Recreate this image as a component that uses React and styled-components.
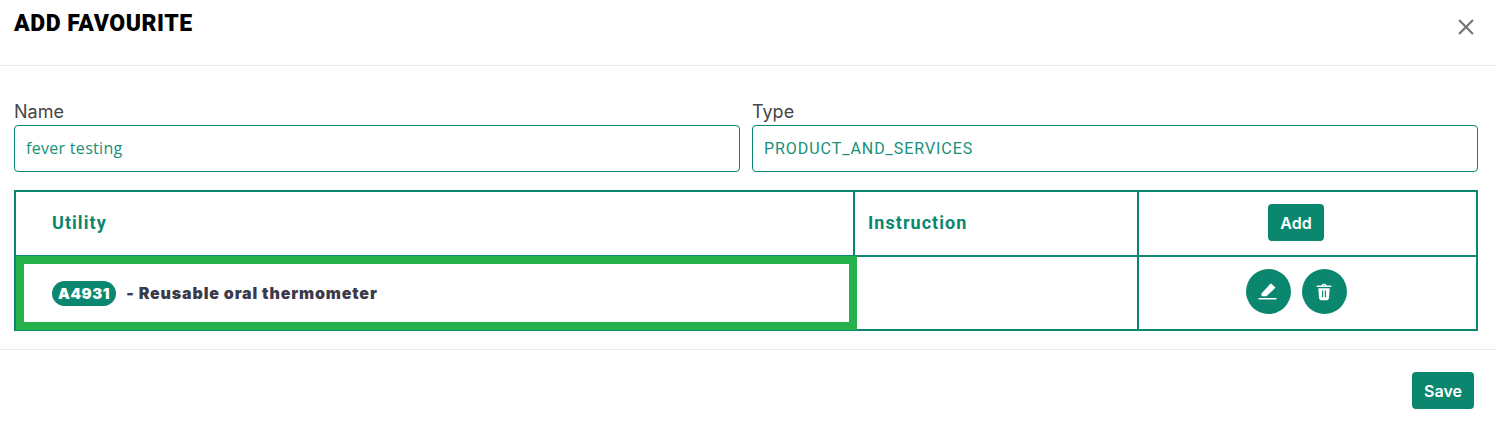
import styled, { createGlobalStyle } from 'styled-components';

const GlobalStyle = createGlobalStyle`
  body {
    margin: 0;
    background: #fff;
    font-family: Inter, "Liberation Sans", sans-serif;
  }
`;

const Modal = styled.div`
  width: 1496px;
  height: 422px;
  overflow: hidden;
`;

const Header = styled.header`
  display: flex;
  justify-content: space-between;
  height: 66px;
  padding: 11px 18px 0 14px;
  box-sizing: border-box;
  border-bottom: 1px solid #e9e9e9;
`;

const Title = styled.h2`
  margin: 0;
  font-family: Roboto, sans-serif;
  font-size: 23px;
  line-height: 26px;
  font-weight: 900;
  color: #000;
  letter-spacing: 0.55px;
`;

const Close = styled.button`
  width: 24px;
  height: 24px;
  margin-top: 4px;
  padding: 0;
  border: 0;
  background: none;
  color: #757575;
`;

const Body = styled.div`
  padding: 33px 18px 18px 14px;
  border-bottom: 1px solid #e9e9e9;
`;

const Fields = styled.div`
  display: grid;
  grid-template-columns: 726px 726px;
  gap: 12px;
  margin-bottom: 18px;
`;

const Field = styled.label`
  display: block;
`;

const LabelText = styled.span`
  display: block;
  margin-bottom: 1px;
  font-size: 18px;
  line-height: 25px;
  color: #454545;
`;

const Input = styled.input`
  display: block;
  width: 100%;
  height: 47px;
  box-sizing: border-box;
  padding: 0 11px ${({ $mono }) => ($mono ? 0 : 2)}px;
  border: 1px solid #0b866f;
  border-radius: 4px;
  outline: none;
  font-family: ${({ $mono }) => ($mono ? 'Roboto' : '"Open Sans"')}, sans-serif;
  font-size: 16px;
  letter-spacing: ${({ $mono }) => ($mono ? '0.95px' : '0.3px')};
  color: #179078;
`;

const Table = styled.table`
  width: 1462px;
  table-layout: fixed;
  border-collapse: collapse;
`;

const Th = styled.th`
  height: 61px;
  padding: 0 ${({ $right }) => $right || 0}px 2px ${({ $pad }) => $pad || 0}px;
  border: 2px solid #0b866f;
  text-align: ${({ $center }) => ($center ? 'center' : 'left')};
  font-family: Roboto, sans-serif;
  font-size: 18px;
  font-weight: 700;
  letter-spacing: 1.05px;
  color: #0b866f;
`;

const Td = styled.td`
  height: 72px;
  padding: 0 0 0 ${({ $pad }) => $pad || 0}px;
  border: 2px solid #0b866f;
`;

/* thick green selection frame, sits over the cell borders */
const HighlightCell = styled(Td)`
  position: relative;

  &::after {
    content: '';
    position: absolute;
    top: -1px;
    left: 0;
    right: -4px;
    bottom: -1px;
    border: 8px solid #25b14c;
    pointer-events: none;
  }
`;

const Code = styled.span`
  display: inline-block;
  padding: 0 6px;
  height: 25px;
  line-height: 25px;
  border-radius: 13px;
  background: #0b866f;
  color: #fff;
  font-size: 15px;
  font-weight: 900;
  letter-spacing: 0.55px;
`;

const Desc = styled.span`
  margin-left: 10px;
  font-size: 16px;
  font-weight: 900;
  letter-spacing: 0.85px;
  color: #3a3a4a;
`;

const Button = styled.button`
  height: 37px;
  padding: 0 12px;
  border: 0;
  border-radius: 4px;
  background: #0b866f;
  color: #fff;
  font-family: Inter, sans-serif;
  font-size: 16px;
  font-weight: 600;
`;

const Actions = styled.div`
  display: flex;
  justify-content: center;
  gap: 11px;
  margin: -3px 23px 0 0;
`;

const RoundButton = styled.button`
  display: flex;
  align-items: center;
  justify-content: center;
  width: 45px;
  height: 45px;
  padding: 0;
  border: 0;
  border-radius: 50%;
  background: #0b866f;
  color: #fff;
`;

const Footer = styled.footer`
  display: flex;
  justify-content: flex-end;
  padding: 22px 22px 0 0;
`;

export default function App() {
  return (
    <Modal>
      <GlobalStyle />
      <Header>
        <Title>ADD FAVOURITE</Title>
        <Close aria-label="Close">
          <svg width="24" height="24" viewBox="0 0 24 24" fill="currentColor">
            <path d="M19 6.41 17.59 5 12 10.59 6.41 5 5 6.41 10.59 12 5 17.59 6.41 19 12 13.41 17.59 19 19 17.59 13.41 12z" transform="translate(-1.2 -1.2) scale(1.1)" />
          </svg>
        </Close>
      </Header>
      <Body>
        <Fields>
          <Field>
            <LabelText>Name</LabelText>
            <Input defaultValue="fever testing" />
          </Field>
          <Field>
            <LabelText>Type</LabelText>
            <Input $mono defaultValue="PRODUCT_AND_SERVICES" />
          </Field>
        </Fields>
        <Table>
          <colgroup>
            <col width="839" />
            <col width="284" />
            <col width="339" />
          </colgroup>
          <thead>
            <tr>
              <Th $pad={36}>Utility</Th>
              <Th $pad={13}>Instruction</Th>
              <Th $center $right={23}>
                <Button>Add</Button>
              </Th>
            </tr>
          </thead>
          <tbody>
            <tr>
              <HighlightCell $pad={36}>
                <Code>A4931</Code>
                <Desc>- Reusable oral thermometer</Desc>
              </HighlightCell>
              <Td />
              <Td>
                <Actions>
                  <RoundButton aria-label="Edit">
                    <svg width="20" height="20" viewBox="0 0 20 20" fill="currentColor">
                      <path d="M.5 16h18v1.600H.5zM3.500 14.300V11.500L12.400 1.800q.5-.4 1 0L17 5q.5.5 0 1L8.500 14.300z" />
                    </svg>
                  </RoundButton>
                  <RoundButton aria-label="Delete">
                    <svg width="18" height="18" viewBox="0 0 24 24" fill="currentColor">
                      <path fillRule="evenodd" d="M8.500 3.200C9 1.800 10.300 1 12 1s3 .8 3.500 2.200H21c.6 0 1 .4 1 1s-.4 1-1 1H3c-.6 0-1-.4-1-1s.4-1 1-1zM10.500 3.200h3c-.3-.4-.8-.6-1.500-.6s-1.200.2-1.500.6zM4.500 7h15l-.8 12.500c-.2 2-1.800 3.500-3.700 3.500H9c-1.900 0-3.500-1.500-3.700-3.500zM9.300 10v9h1.600v-9zm3.800 0v9h1.600v-9z" />
                    </svg>
                  </RoundButton>
                </Actions>
              </Td>
            </tr>
          </tbody>
        </Table>
      </Body>
      <Footer>
        <Button>Save</Button>
      </Footer>
    </Modal>
  );
}
